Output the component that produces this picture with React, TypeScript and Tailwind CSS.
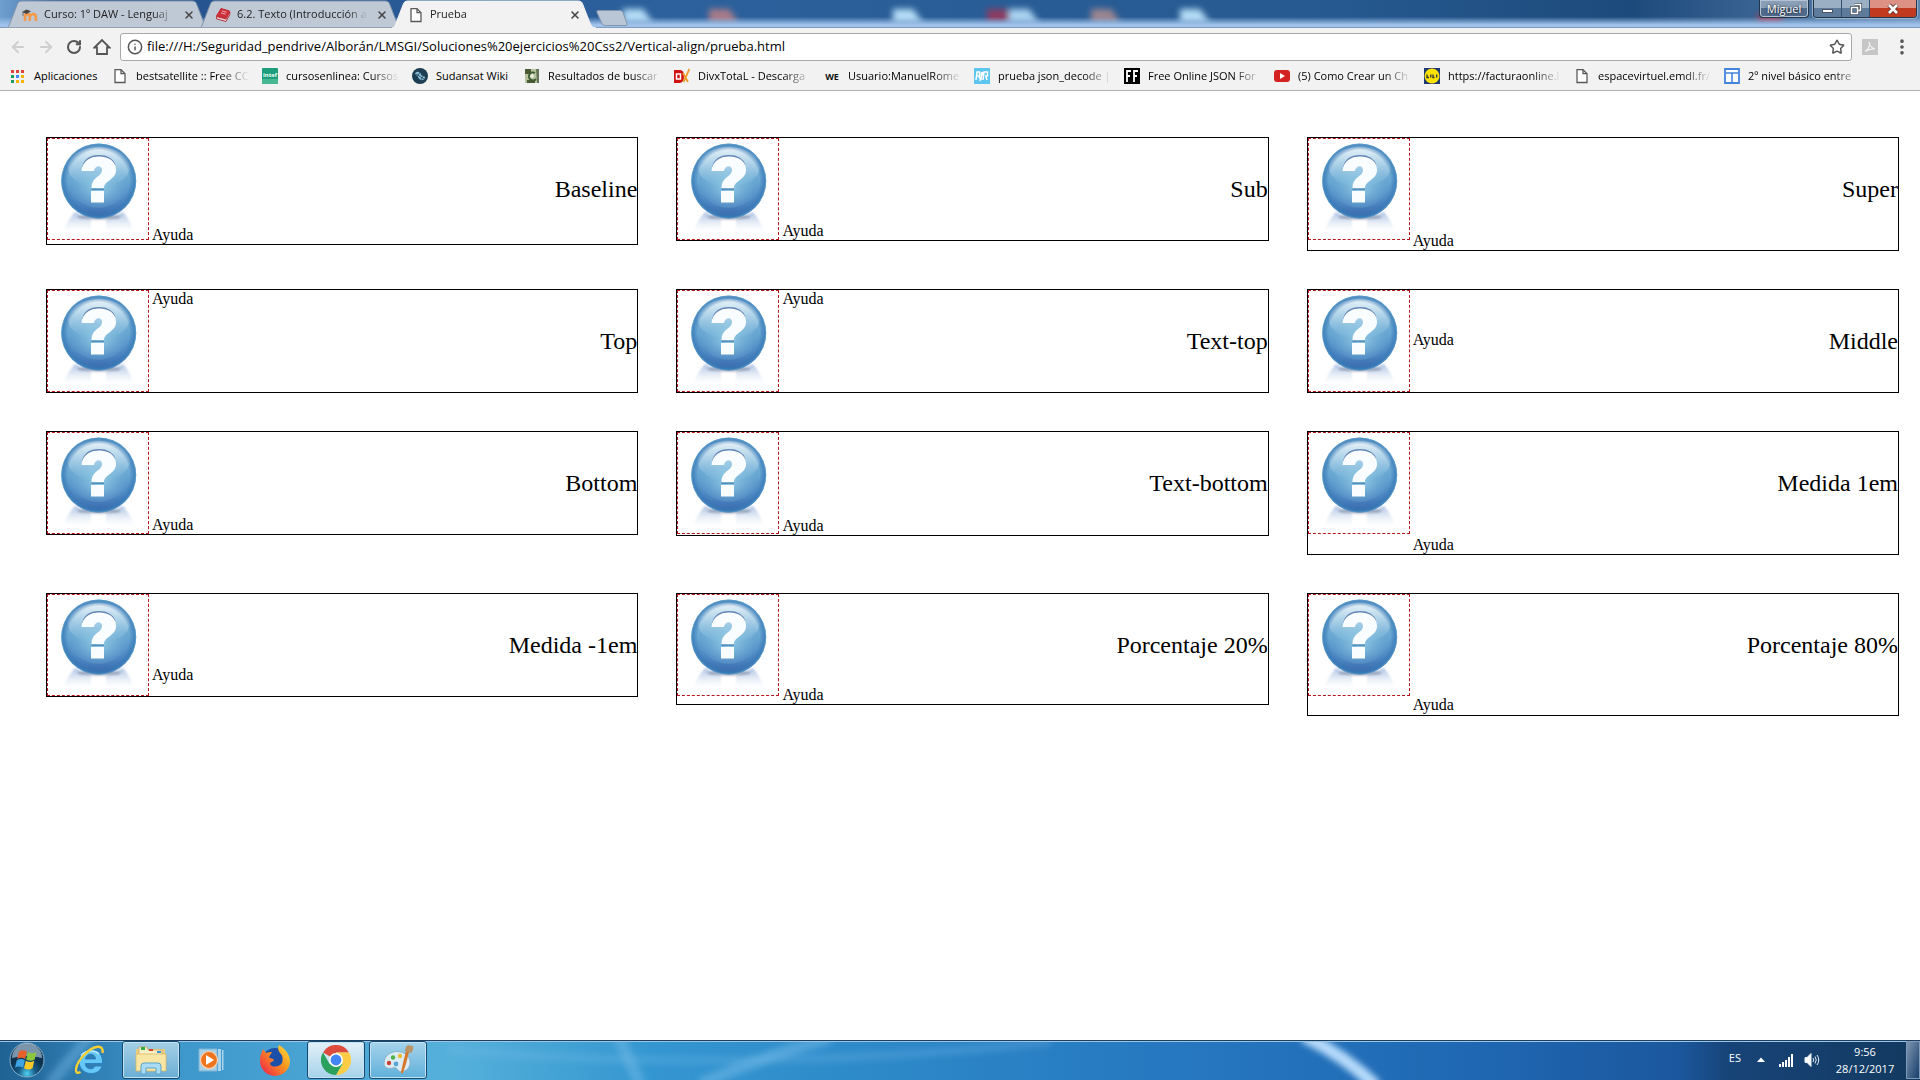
import React from 'react';
import { ArrowLeft, ArrowRight, RotateCw, Info, Star, X, EllipsisVertical } from 'lucide-react';

function PageIcon() {
  return (
    <svg className="h-4 w-4 shrink-0" viewBox="0 0 16 16" fill="#fff" stroke="#5a5a5a" strokeWidth="1.3">
      <path d="M3 1.7h6l4 4v8.8H3z" />
      <path d="M9 1.7v4h4" fill="none" />
    </svg>
  );
}

function MoodleIcon() {
  return (
    <svg className="h-4 w-4 shrink-0" viewBox="0 0 16 16" fill="none">
      <path d="M3 14V9.5a2.4 2.4 0 0 1 4.8 0V14M7.8 9.5M8.4 9a2.8 2.8 0 0 1 5.4 0.500V14" stroke="#f39a4a" strokeWidth="2.600" />
      <path d="M0 5 4.500 2.500 9 4.200 4.600 7z" fill="#4b4540" />
      <path d="M1 5v4" stroke="#6b5a48" strokeWidth=".8" />
    </svg>
  );
}

function BookIcon() {
  return (
    <svg className="h-4 w-4 shrink-0" viewBox="0 0 16 16">
      <path d="M6 1.500 14.500 4 11 11.500 1.500 9z" fill="#cf2f3a" stroke="#c32a35" strokeLinejoin="round" />
      <path d="M1.500 9.500v2.300L11 14.500l3.800-7V5L11 12z" fill="#f0dcde" stroke="#b3202c" strokeWidth=".9" strokeLinejoin="round" />
      <path d="m7 4 4.500 1.200M6.200 6l4.500 1.200" stroke="#f4aab0" strokeWidth="1" />
    </svg>
  );
}

type TabProps = { icon: React.ReactNode; title: string; active?: boolean };

function Tab({ icon, title, active }: TabProps) {
  return (
    <div className={active ? 'relative z-10 -mr-[13px] h-7 w-[206px]' : 'relative -mr-[13px] h-7 w-[206px]'}>
      <svg className="absolute inset-0 h-full w-full" viewBox="0 0 206 28" preserveAspectRatio="none">
        <path
          d="M0 28C2 28 3 26 4 23L11 5C12 2 13 1 16 1H186C189 1 190 2 191 5L198 23C199 26 201 28 204 28Z"
          fill={active ? '#f2f2f2' : '#bfc9d6'}
          stroke={active ? '#f2f2f2' : '#8093ab'}
        />
        {!active && <path d="M0 27.500H206" stroke="#93a2b5" />}
      </svg>
      <div className="relative flex h-full items-center gap-1.5 pt-px pr-[15px] pl-4">
        {icon}
        <a
          href="#"
          className="min-w-0 flex-1 overflow-hidden text-[11px] whitespace-nowrap text-[#222] [mask-image:linear-gradient(to_right,#000_84%,transparent)]"
        >
          {title}
        </a>
        <button aria-label={`Cerrar ${title}`} className="shrink-0 px-0.5 text-[#4a4a4a]">
          <X className="h-3 w-3" strokeWidth={3.2} />
        </button>
      </div>
    </div>
  );
}

function TitleBackdrop() {
  const blobs = [
    ['#b4dcf5', 638], ['#a97c88', 724], ['#b4dcf5', 908], ['#8b3a62', 1002], ['#a9d2f0', 1024], ['#9c8590', 1106], ['#b4dcf5', 1195],
  ] as const;
  return (
    <svg className="absolute inset-0 h-full w-full" viewBox="0 0 1920 28" preserveAspectRatio="none">
      <defs>
        <linearGradient id="sky">
          <stop offset="0" stopColor="#6f9fce" />
          <stop offset=".012" stopColor="#5b8cc0" />
          <stop offset=".03" stopColor="#24508c" />
          <stop offset=".35" stopColor="#2c619d" />
          <stop offset=".7" stopColor="#26598f" />
          <stop offset=".85" stopColor="#1d4a7c" />
          <stop offset="1" stopColor="#5d84ae" />
        </linearGradient>
        <linearGradient id="glow" x2="0" y2="1">
          <stop offset=".6" stopColor="#9fc2ea" stopOpacity="0" />
          <stop offset=".88" stopColor="#9fc2ea" />
        </linearGradient>
        <filter id="soft" x="-50%" y="-50%" width="200%" height="200%"><feGaussianBlur stdDeviation="3" /></filter>
      </defs>
      <rect width="1920" height="28" fill="url(#sky)" />
      <g filter="url(#soft)">
        {blobs.map(([c, x]) => <path key={x} d={`M${x - 15} 9h20l10 14h-30z`} fill={c} />)}
        <path d="M1758 14h24v9h-24z" fill="#a03a54" />
      </g>
      <rect width="1920" height="28" fill="url(#glow)" />
      <path d="M0 27.500H1920" stroke="#7f9bc0" />
    </svg>
  );
}

function TitleBar() {
  return (
    <header className="relative flex h-7 items-start">
      <TitleBackdrop />
      <nav aria-label="Pestañas" className="relative flex min-w-0 flex-1 pl-1.5">
        <Tab icon={<MoodleIcon />} title="Curso: 1º DAW - Lenguaj" />
        <Tab icon={<BookIcon />} title="6.2. Texto (Introducción a" />
        <Tab icon={<PageIcon />} title="Prueba" active />
        <button aria-label="Nueva pestaña" className="mt-2 ml-2.5">
          <svg className="h-4 w-[34px]" viewBox="0 0 34 16">
            <path d="M3 .5h22q2 0 3 2l4 11q.7 2-1 2H10q-2 0-3-2L2 2.500Q1.500.5 3 .5z" fill="#b9c6d5" stroke="#8496ad" />
          </svg>
        </button>
      </nav>
      <div className="relative flex gap-1 pr-[3px]">
        <button className="h-[18px] w-[50px] rounded-b border border-t-0 border-[#24364d] bg-linear-to-b from-[#8ba0b8] from-50% to-[#4f6a8b] to-50% text-[11px] leading-4 text-white shadow-[inset_0_0_0_1px_#b4c3d4] [text-shadow:0_0_3px_#000]">
          Miguel
        </button>
        <div className="flex h-[18px] overflow-hidden rounded-b border border-t-0 border-[#24364d] shadow-[0_0_1px_1px_#9fb4cc]">
          <button aria-label="Minimizar" className="flex w-7 items-center justify-center border-r border-[#34506f] bg-linear-to-b from-[#9aaec4] from-50% to-[#5f7b9c] to-50%">
            <span className="mt-1 h-1 w-[11px] border border-[#4b5563] bg-white" />
          </button>
          <button aria-label="Restaurar" className="flex w-7 items-center justify-center border-r border-[#34506f] bg-linear-to-b from-[#9aaec4] from-50% to-[#5f7b9c] to-50%">
            <svg className="h-3 w-3" viewBox="0 0 12 12" fill="none">
              <path d="M4.500 1.500h6v6h-2M1.500 4.500h6v6h-6z" stroke="#46505f" strokeWidth="3" />
              <path d="M4.500 1.500h6v6h-2M1.500 4.500h6v6h-6z" stroke="#fff" strokeWidth="1.500" />
            </svg>
          </button>
          <button aria-label="Cerrar" className="flex w-[46px] items-center justify-center bg-linear-to-b from-[#dc9184] from-50% to-[#c13a20] to-50%">
            <svg className="h-3 w-3" viewBox="0 0 12 12">
              <path d="m2 2 8 8m0-8-8 8" stroke="#5c2b25" strokeWidth="4.500" />
              <path d="m2 2 8 8m0-8-8 8" stroke="#fff" strokeWidth="2.800" />
            </svg>
          </button>
        </div>
      </div>
    </header>
  );
}

function Toolbar() {
  return (
    <div className="flex h-[38px] items-center bg-[#f2f2f2] pr-2 pl-2">
      <button aria-label="Atrás" className="flex w-7 pl-px text-[#cfcfcf]"><ArrowLeft className="h-[18px] w-[18px]" strokeWidth={2.4} /></button>
      <button aria-label="Adelante" className="flex w-7 pl-px text-[#cfcfcf]"><ArrowRight className="h-[18px] w-[18px]" strokeWidth={2.4} /></button>
      <button aria-label="Recargar" className="flex w-7 pl-0.5 text-[#555]"><RotateCw className="h-4 w-4" strokeWidth={3} /></button>
      <button aria-label="Inicio" className="flex w-7 pl-px text-[#555]">
        <svg className="h-[18px] w-[18px]" viewBox="0 0 18 18" fill="none" stroke="currentColor" strokeWidth="1.800">
          <path d="M1.500 9.500 9 2l7.500 7.500H14V16H4V9.500z" />
        </svg>
      </button>
      <div className="flex h-7 min-w-0 flex-1 items-center rounded-[3px] border border-[#a9a9a9] bg-white px-1.5">
        <Info className="h-4 w-4 shrink-0 text-[#555]" strokeWidth={2.2} />
        <input
          aria-label="Dirección"
          className="ml-1 min-w-0 flex-1 bg-transparent text-[13px] text-black outline-none"
          defaultValue="file:///H:/Seguridad_pendrive/Alborán/LMSGI/Soluciones%20ejercicios%20Css2/Vertical-align/prueba.html"
        />
        <button aria-label="Añadir a marcadores" className="text-[#555]"><Star className="h-4 w-4" strokeWidth={2.2} /></button>
      </div>
      <button aria-label="Acrobat" className="ml-2.5">
        <svg className="h-4 w-4" viewBox="0 0 16 16">
          <path d="M0 0h16v16H0z" fill="#c6c6c6" />
          <path d="M3 12.500C6 11 8.500 6 7.500 3.500c-1.200-1 .5 5.500 5.500 6.500C10 9.500 6 10.500 3 12.500z" fill="none" stroke="#f2f2f2" strokeWidth="1.200" />
        </svg>
      </button>
      <button aria-label="Menú" className="ml-3.5 text-[#555]"><EllipsisVertical className="h-5 w-5" strokeWidth={2.4} /></button>
    </div>
  );
}

function Glyph({ children }: { children: React.ReactNode }) {
  return <svg className="h-4 w-4 shrink-0" viewBox="0 0 16 16">{children}</svg>;
}

const bookmarks: { icon: React.ReactNode; label: string; short?: boolean }[] = [
  { icon: <PageIcon />, label: 'bestsatellite :: Free CC' },
  {
    icon: (
      <Glyph>
        <rect width="16" height="16" rx="1" fill="#1c9e7c" /><path d="M0 11h16v5H0z" fill="#46b893" />
        <text x="8" y="9" fontSize="6" fontWeight="700" textAnchor="middle" fill="#e8fff6">intef</text>
      </Glyph>
    ),
    label: 'cursosenlinea: Cursos',
  },
  {
    icon: (
      <Glyph>
        <circle cx="8" cy="8" r="8" fill="#1c3e50" />
        <path d="M3 5.500C5 2.500 9 4 9 7l4 2c0 3-4 4.500-6 1.500z" fill="#8dc2dc" />
        <path d="m4 6 8 5M8 4 5 9m6-1-2 4" stroke="#1c3e50" strokeWidth=".8" />
      </Glyph>
    ),
    label: 'Sudansat Wiki',
    short: true,
  },
  {
    icon: (
      <Glyph>
        <path d="M1 1h14v14H1z" fill="#b7c39e" /><path d="M1 1h6v5H1zM3 12h8v3H3z" fill="#4b5a35" />
        <path d="M11 5a4 4 0 1 0 1 6" fill="none" stroke="#3f5b36" strokeWidth="2" /><path d="M12 1h3v14h-2z" fill="#687459" />
        <circle cx="8" cy="8" r="1.800" fill="#eef2df" />
      </Glyph>
    ),
    label: 'Resultados de buscar',
  },
  {
    icon: (
      <Glyph>
        <path d="M0 2h6q4 0 4 6t-4 7H0z" fill="#cf1310" /><path d="M2.500 6h4v5h-4z" fill="none" stroke="#fff" strokeWidth="1.500" />
        <path d="m9 5 5 9M15.500 1 9.500 14" stroke="#f09a2c" strokeWidth="1.800" />
      </Glyph>
    ),
    label: 'DivxTotaL - Descarga',
  },
  {
    icon: <Glyph><text x="8" y="11.500" fontSize="9" fontWeight="700" textAnchor="middle" fill="#111">WE</text></Glyph>,
    label: 'Usuario:ManuelRome',
  },
  {
    icon: (
      <Glyph>
        <path d="M0 0h16v16H0z" fill="#5cc6ef" />
        <path d="M2 12 3 4h2.500v4H3m4 4 .5-8M9 12l1-8h3.500v4H11M5 9l2 3m5-3 1 3M6 13l3-9" fill="none" stroke="#fff" strokeWidth="1.500" />
      </Glyph>
    ),
    label: 'prueba json_decode |',
  },
  {
    icon: (
      <Glyph>
        <path d="M0 0h16v16H0z" fill="#000" />
        <path d="M3 14V3h4M3 8h3M10 14V3h4M10 8h3" fill="none" stroke="#fff" strokeWidth="1.800" />
      </Glyph>
    ),
    label: 'Free Online JSON For',
  },
  {
    icon: <Glyph><rect y="2" width="16" height="12" rx="3" fill="#d3221f" /><path d="m6 5 5 3-5 3z" fill="#fff" /></Glyph>,
    label: '(5) Como Crear un Ch',
  },
  {
    icon: (
      <Glyph>
        <path d="M0 0h16v16H0z" fill="#1c3974" /><circle cx="8" cy="8" r="7.500" fill="#fbe200" />
        <path d="M3 6.500v3h2M6.800 6.500v3M9 6.500v3h1.500M12.700 6.500v3" fill="none" stroke="#2a2f40" strokeWidth="1.300" />
      </Glyph>
    ),
    label: 'https://facturaonline.l',
  },
  { icon: <PageIcon />, label: 'espacevirtuel.emdl.fr/' },
  {
    icon: (
      <Glyph>
        <path d="M1 1h14v14H1z" fill="#fff" stroke="#4484dc" strokeWidth="1.800" />
        <path d="M1 5h14M8 5v10" stroke="#4484dc" strokeWidth="1.600" />
      </Glyph>
    ),
    label: '2º nivel básico entre',
  },
];

function BookmarksBar() {
  const dots = ['#db4437', '#db4437', '#db4437', '#1a9c58', '#4484f4', '#f4b400', '#1a9c58', '#f4b400', '#f4b400'];
  return (
    <nav aria-label="Marcadores" className="flex h-[25px] items-center border-b border-[#b0b0b0] bg-[#f2f2f2] pb-1 pl-[11px] text-[11px] text-black">
      <a href="#" className="flex w-[101px] shrink-0 items-center gap-2.5">
        <svg className="h-[13px] w-[13px]" viewBox="0 0 13 13">
          {dots.map((c, i) => <rect key={i} x={(i % 3) * 5} y={Math.floor(i / 3) * 5} width="3" height="3" fill={c} />)}
        </svg>
        Aplicaciones
      </a>
      {bookmarks.map((b) => (
        <a key={b.label} href="#" className={b.short ? 'flex w-28 shrink items-center gap-2' : 'flex w-[150px] shrink items-center gap-2 pr-2'}>
          {b.icon}
          <span
            className={
              b.short
                ? 'whitespace-nowrap'
                : 'min-w-0 flex-1 overflow-hidden whitespace-nowrap [mask-image:linear-gradient(to_right,#000_72%,transparent_96%)]'
            }
          >
            {b.label}
          </span>
        </a>
      ))}
    </nav>
  );
}

function HelpImage({ align }: { align: string }) {
  return (
    <svg role="img" aria-label="Ayuda" className={`inline h-[102px] w-[102px] border border-dashed border-[#b4161b] ${align}`} viewBox="0 0 100 100">
      <defs>
        <linearGradient id="ball" x2="0" y2="1">
          <stop offset="0" stopColor="#9cc6e2" />
          <stop offset=".5" stopColor="#67a6d2" />
          <stop offset=".8" stopColor="#4a84c1" />
          <stop offset="1" stopColor="#3967ab" />
        </linearGradient>
        <radialGradient id="rim">
          <stop offset=".82" stopColor="#2d6fb0" stopOpacity="0" />
          <stop offset=".96" stopColor="#3a7db8" stopOpacity=".8" />
          <stop offset="1" stopColor="#68a6ce" />
        </radialGradient>
        <linearGradient id="shine" x2="0" y2="1">
          <stop offset="0" stopColor="#fff" stopOpacity=".8" />
          <stop offset="1" stopColor="#b8e2f0" stopOpacity="0" />
        </linearGradient>
        <radialGradient id="core" cy=".6">
          <stop offset="0" stopColor="#a4dcec" stopOpacity=".75" />
          <stop offset="1" stopColor="#8cc8e4" stopOpacity="0" />
        </radialGradient>
        <linearGradient id="mirror" x2="0" y2="1">
          <stop offset="0" stopColor="#a9bfe0" />
          <stop offset="1" stopColor="#eef4fb" stopOpacity="0" />
        </linearGradient>
        <filter id="haze" x="-20%" y="-100%" width="140%" height="300%"><feGaussianBlur stdDeviation="1.200" /></filter>
      </defs>
      <path d="M27 73Q20 81 15 92 30 96 43 92V80zM75 73q7 8 11 19-14 4-28 0V80z" fill="url(#mirror)" filter="url(#haze)" />
      <ellipse cx="51" cy="78" rx="22" ry="2.500" fill="#7d8da6" opacity=".7" filter="url(#haze)" />
      <circle cx="50.700" cy="42" r="37.500" fill="url(#ball)" />
      <ellipse cx="50.700" cy="44" rx="29" ry="25" fill="url(#core)" />
      <ellipse cx="50.700" cy="28" rx="31" ry="20" fill="url(#shine)" />
      <circle cx="50.700" cy="42" r="37.500" fill="url(#rim)" />
      <path d="M35 28C37 19.500 43 16.800 51 16.800S64 19 66.500 26" fill="none" stroke="#6384b4" strokeWidth="1.800" />
      <path d="M33.500 32C34.500 22 42 17.500 51 17.500c10 0 17 5 17 13.500 0 10-12 10.500-12 18H43.500C43.500 37.500 54 38 54 31c0-5-7-5-8 1z" fill="#fafdff" />
      <path d="M43 52h13V63.500H43z" fill="#fafdff" />
      <path d="M43.500 50.200H56" stroke="#3f78ac" strokeWidth="1" />
    </svg>
  );
}

const examples: { title: string; align: string }[] = [
  { title: 'Baseline', align: 'align-baseline' },
  { title: 'Sub', align: 'align-sub' },
  { title: 'Super', align: 'align-super' },
  { title: 'Top', align: 'align-top' },
  { title: 'Text-top', align: 'align-text-top' },
  { title: 'Middle', align: 'align-middle' },
  { title: 'Bottom', align: 'align-bottom' },
  { title: 'Text-bottom', align: 'align-text-bottom' },
  { title: 'Medida 1em', align: 'align-[1em]' },
  { title: 'Medida -1em', align: 'align-[-1em]' },
  { title: 'Porcentaje 20%', align: 'align-[20%]' },
  { title: 'Porcentaje 80%', align: 'align-[80%]' },
];

function Examples() {
  return (
    <main className="grid flex-1 grid-cols-3 content-start items-start gap-[38px] bg-white pt-[46px] pr-[21px] pb-[46px] pl-[46px] font-['Liberation_Serif',serif] text-black">
      {examples.map(({ title, align }) => (
        <section key={title} className="border border-black text-base leading-[normal]">
          <h2 className="float-right mt-[38px] text-2xl leading-[27px]">{title}</h2>
          <HelpImage align={align} /> Ayuda
        </section>
      ))}
    </main>
  );
}

function Wallpaper() {
  return (
    <svg className="absolute inset-0 h-full w-full" viewBox="0 0 1920 40" preserveAspectRatio="none">
      <defs>
        <linearGradient id="aero">
          <stop offset="0" stopColor="#1f6193" />
          <stop offset=".045" stopColor="#2f7db2" />
          <stop offset=".09" stopColor="#3d97cb" />
          <stop offset=".235" stopColor="#55b0da" />
          <stop offset=".34" stopColor="#3496d0" />
          <stop offset=".5" stopColor="#2b84c6" />
          <stop offset=".65" stopColor="#2474bd" />
          <stop offset=".78" stopColor="#1f66b1" />
          <stop offset=".875" stopColor="#1b579d" />
          <stop offset=".9" stopColor="#174478" />
          <stop offset="1" stopColor="#12395f" />
        </linearGradient>
        <filter id="beam" x="-50%" y="-50%" width="200%" height="200%"><feGaussianBlur stdDeviation="3" /></filter>
      </defs>
      <rect width="1920" height="40" fill="url(#aero)" />
      <g filter="url(#beam)" fill="none">
        <path d="M1304-4Q1345 16 1376 46" stroke="#b5dafb" strokeWidth="13" />
        <path d="M700 44Q770 14 830-2" stroke="#7cc0ea" strokeOpacity=".45" strokeWidth="12" />
        <path d="M450 10Q750 34 1050 2" stroke="#7cc0ea" strokeOpacity=".25" strokeWidth="8" />
        <path d="M618-4 640 44M50 44 90-4" stroke="#7cc0ea" strokeOpacity=".4" strokeWidth="12" />
      </g>
      <path d="M0 .5H1920" stroke="#1e3f60" />
      <path d="M0 1.500H1920" stroke="#9cc6e6" />
    </svg>
  );
}

function StartOrb() {
  return (
    <svg className="h-9 w-9" viewBox="0 0 36 36">
      <defs>
        <radialGradient id="orb" cy=".9">
          <stop offset="0" stopColor="#4fd4f5" />
          <stop offset=".5" stopColor="#175b86" />
          <stop offset="1" stopColor="#0d3350" />
        </radialGradient>
      </defs>
      <circle cx="18" cy="18" r="17" fill="url(#orb)" stroke="#86aec8" />
      <path d="M3 16a15 15 0 0 1 30 0q-15-4-30 0z" fill="#c5d8e6" opacity=".6" />
      <path d="M10 9.500q4-2.500 8 0l-1.800 7.500q-4-2.500-8 0z" fill="#e8602c" />
      <path d="M19 10q4 2.500 8.500 0l-1.800 7.500q-4 2.500-8.500 0z" fill="#8cc63f" />
      <path d="M7.800 18.300q4-2.500 8 0l-1.800 7.500q-4-2.500-8 0z" fill="#3fa4e4" />
      <path d="M16.800 18.800q4 2.500 8.500 0l-1.800 7.500q-4 2.500-8.500 0z" fill="#fbc825" />
    </svg>
  );
}

function ExplorerE() {
  return (
    <svg className="h-8 w-8" viewBox="0 0 32 32" fill="none">
      <path d="M17 5.500C9.500 5.500 5 11 5 17.500S10 29.500 17 29.500c5.500 0 9.500-2.500 11-7.500h-7c-1 2-2.500 2.800-4.500 2.800-3 0-5-1.800-5.200-5.300H28.500C29 11 24.500 5.500 17 5.500zM11.400 15c.5-3 2.400-4.700 5.200-4.700s4.800 1.700 5 4.700z" fill="#66c8f6" stroke="#2479bb" strokeWidth=".8" />
      <path d="M7 11.500C10 7 20 5 25 10" stroke="#c9effd" strokeWidth="1.500" opacity=".8" />
      <path d="M6.500 28C-1 32 1 20 10.500 10.500S30 0 28.500 9" stroke="#f6cf34" strokeWidth="2.400" />
    </svg>
  );
}

function FolderIcon() {
  return (
    <svg className="h-8 w-8" viewBox="0 0 32 32">
      <path d="M1 5h29v22H1z" fill="#e9cd7c" />
      <path d="M4 3h8l1 3h14v5H4z" fill="#f7efc8" stroke="#caa857" strokeWidth=".7" />
      <path d="M6 3h4v3H6z" fill="#39a845" /><path d="M14 5h4v2h-4z" fill="#d8442c" /><path d="M22 7h4v2h-4z" fill="#3b8ed8" />
      <path d="M1 10h30v17H1z" fill="#f8e7a4" stroke="#d8b863" strokeWidth=".8" />
      <path d="M6 30v-8q0-3 3-3h14q3 0 3 3v8h-5v-6H11v6z" fill="#a9dcf2" stroke="#5aa3cc" />
    </svg>
  );
}

function MediaIcon() {
  return (
    <svg className="h-7 w-7" viewBox="0 0 28 28">
      <path d="M20 3h3v22h-3zM24 4h1.500v20H24z" fill="#a9d4ec" />
      <path d="M1 3h18v22H1z" fill="#a8d0e6" stroke="#7db5d6" />
      <circle cx="11" cy="14" r="8.500" fill="#ee7420" stroke="#fbd2ae" strokeWidth="1.200" />
      <path d="m8 9 8 5-8 5z" fill="#fff" />
    </svg>
  );
}

function FirefoxIcon() {
  return (
    <svg className="h-8 w-8" viewBox="0 0 32 32">
      <defs>
        <linearGradient id="fox" x1="1" x2="0" y2=".9">
          <stop offset="0" stopColor="#ffe637" />
          <stop offset=".45" stopColor="#ff9420" />
          <stop offset="1" stopColor="#ee1f4b" />
        </linearGradient>
      </defs>
      <circle cx="16" cy="17" r="13" fill="#1b4fa8" />
      <path d="M20 1c5 3 11 9 11 16a15 15 0 0 1-30 0C1 11 3 8 4 5l3 4c2-1 4-1 6-1l-3 5c1 2 4 1 5 3-1 2-4 2-4 4 2 4 10 3 12-1 1-4 1-6-1-9-2-2-4-5-2-9z" fill="url(#fox)" />
    </svg>
  );
}

function ChromeIcon() {
  return (
    <svg className="h-[30px] w-[30px]" viewBox="0 0 30 30">
      <path d="M15 15 2 7.500A15 15 0 0 1 28 7.500H15z" fill="#dd4b3e" />
      <path d="M15 7.500H28A15 15 0 0 1 15 30L21.500 18.750z" fill="#fdce45" />
      <path d="M8.500 18.750 2 7.500A15 15 0 0 0 15 30l6.500-11.250z" fill="#2ba15d" />
      <circle cx="15" cy="15" r="7" fill="#fff" /><circle cx="15" cy="15" r="5.400" fill="#4285f4" />
    </svg>
  );
}

function PaintIcon() {
  return (
    <svg className="h-8 w-8" viewBox="0 0 32 32">
      <path d="M2 19C2 10 12 6 19 8c8 2 11 9 8 15-3 5-9 6-11 3-1-2-3-3-5-2-5 1-9 0-9-5z" fill="#dcecf5" stroke="#8db4cb" />
      <circle cx="7" cy="19" r="2.200" fill="#c94130" /><circle cx="11" cy="13.500" r="2.200" fill="#52b144" /><circle cx="18" cy="12" r="2.200" fill="#e9bd34" /><circle cx="14" cy="20" r="2.400" fill="#5aa6d4" />
      <path d="m27 8-3 12-3 9q-2 1-2-1l2-9 3-12z" fill="#d5792b" />
      <path d="M23 7q0-4 3-6l5 1q1 4-2 7z" fill="#b99468" />
    </svg>
  );
}

function Taskbar() {
  const lit = 'flex h-[38px] w-[58px] items-center justify-center rounded-[3px] border border-[#174a70] shadow-[inset_0_0_0_1px_#c3e2f3]';
  const plain = 'flex h-[38px] items-center justify-center';
  return (
    <footer className="relative flex h-10 items-center text-white">
      <Wallpaper />
      <div className="relative flex flex-1 items-center pl-[9px]">
        <button aria-label="Inicio de Windows" className={`${plain} w-9`}><StartOrb /></button>
        <button aria-label="Internet Explorer" className={`${plain} ml-[14px] w-[62px]`}><ExplorerE /></button>
        <button aria-label="Explorador de Windows" className={`${lit} ml-px bg-linear-to-b from-[#a5cfe6] to-[#69aed4]`}><FolderIcon /></button>
        <button aria-label="Reproductor multimedia" className={`${plain} w-[64px]`}><MediaIcon /></button>
        <button aria-label="Firefox" className={`${plain} w-[62px]`}><FirefoxIcon /></button>
        <button aria-label="Google Chrome" className={`${lit} ml-px bg-linear-to-b from-[#e3f1f8] to-[#a4d2ea]`}><ChromeIcon /></button>
        <button aria-label="Paint" className={`${lit} ml-1 bg-linear-to-b from-[#a5d3ec] to-[#5fb0da]`}><PaintIcon /></button>
      </div>
      <div className="relative flex h-full items-center text-[11px] leading-[17px]">
        <button className="pb-1.5">ES</button>
        <button aria-label="Mostrar iconos ocultos" className="ml-4">
          <svg className="h-2 w-2" viewBox="0 0 8 8"><path d="m4 1.500 4 4.500H0z" fill="#fff" /></svg>
        </button>
        <button aria-label="Red" className="ml-3.5">
          <svg className="h-[13px] w-[15px]" viewBox="0 0 15 13"><path d="M0 10h2v3H0zM3 8h2v5H3zM6 6h2v7H6zM9 3h2v10H9zM12 0h2v13h-2z" fill="#fff" /></svg>
        </button>
        <button aria-label="Volumen" className="ml-2.5">
          <svg className="h-4 w-4" viewBox="0 0 16 16" fill="none" stroke="#e6eff8">
            <path d="M1 5.500h2L7 1.500v13l-4-4H1z" fill="#fff" /><path d="M9 6q1.500 2 0 4M11 4.500q2.500 3.500 0 7M13 3q3.500 5 0 10" />
          </svg>
        </button>
        <button className="ml-3 w-[66px] text-center">
          <time dateTime="2017-12-28T09:56">9:56<br />28/12/2017</time>
        </button>
        <button aria-label="Mostrar escritorio" className="ml-2 h-[38px] w-[14px] border border-[#7d9bb9] bg-linear-to-br from-[#7f96b0] to-[#173f6c]" />
      </div>
    </footer>
  );
}

export default function App() {
  return (
    <div className="flex min-h-screen flex-col bg-white font-['Open_Sans','Noto_Sans',sans-serif]">
      <TitleBar />
      <Toolbar />
      <BookmarksBar />
      <Examples />
      <Taskbar />
    </div>
  );
}
